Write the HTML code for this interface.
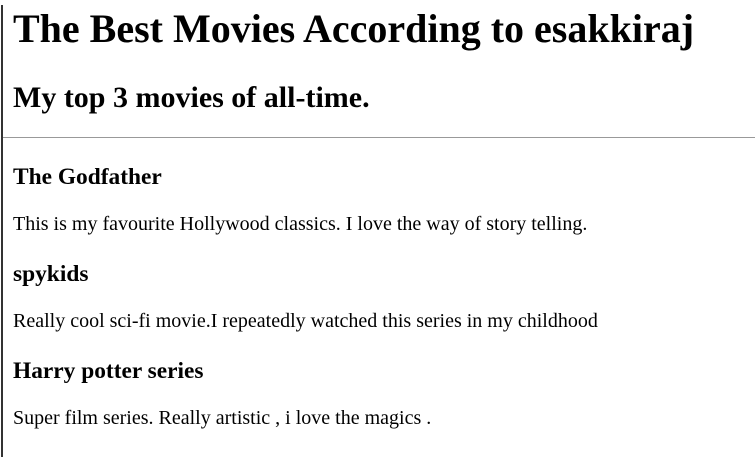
<!DOCTYPE html>
<html><head><style>
html,body{margin:0;padding:0;background:#fff}
body{font-family:"Liberation Serif",serif;color:#000;border-left:2px solid #333;margin-left:1px;min-height:452px;box-sizing:border-box;overflow:hidden}
.w{zoom:1.25;padding-left:8px}
h1{font-size:32px;margin:4px 0 23.5px}
h2{font-size:24px;margin:20px 0 17px}
hr{margin:0 0 0 -8px;border:0;border-top:1px solid #999;}
h3{font-size:18.72px;margin:21px 0 18px}
h3 ~ h3{margin-top:19.6px}
p{font-size:16px;margin:17px 0}
</style></head><body><div class="w">
<h1>The Best Movies According to esakkiraj</h1>
<h2>My top 3 movies of all-time.</h2>
<hr>
<h3>The Godfather</h3>
<p>This is my favourite Hollywood classics. I love the way of story telling.</p>
<h3>spykids</h3>
<p>Really cool sci-fi movie.I repeatedly watched this series in my childhood</p>
<h3>Harry potter series</h3>
<p>Super film series. Really artistic , i love the magics .</p>
</div></body></html>
